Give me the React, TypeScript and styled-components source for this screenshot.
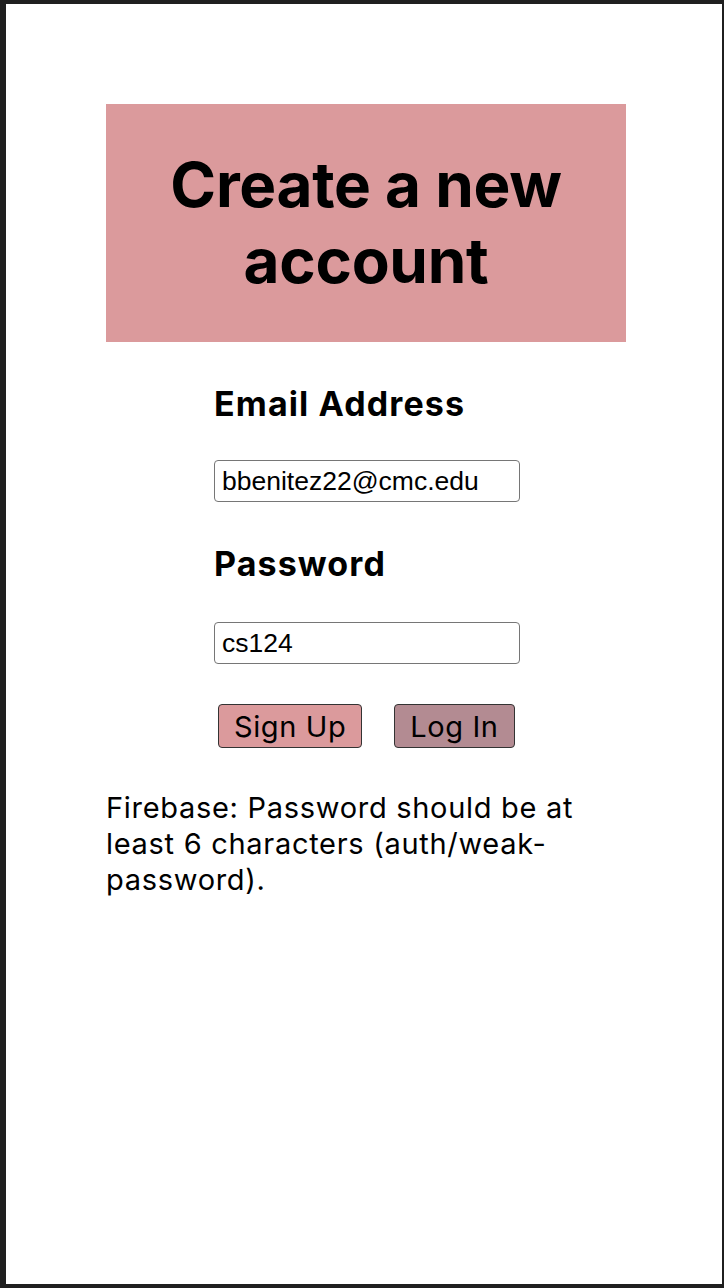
import React from "react";
import styled, { createGlobalStyle } from "styled-components";

const Global = createGlobalStyle`
  html, body { margin: 0; padding: 0; background: #1f1f1f; }
  body { font-family: Inter, "Noto Sans", sans-serif; }
`;

const Frame = styled.div`
  margin: 4px 2px 0 6px;
  height: 1280px;
  background: #ffffff;
  padding: 100px 0 0 100px;
  box-sizing: border-box;
`;

const Column = styled.div`
  width: 520px;
  display: flex;
  flex-direction: column;
`;

const TitleBox = styled.div`
  background: #db9a9c;
  height: 238px;
  display: flex;
  align-items: center;
  justify-content: center;
`;

const Title = styled.h1`
  margin: 0;
  font-family: Inter, sans-serif;
  font-weight: 700;
  font-size: 62px;
  line-height: 76px;
  text-align: center;
  color: #000;
  letter-spacing: -0.3px;
`;

const Form = styled.div`
  display: flex;
  flex-direction: column;
  align-items: flex-start;
  padding-left: 108px;
`;

const Label = styled.h2<{ $top: number }>`
  margin: ${(p) => p.$top}px 0 0 0;
  font-family: Inter, sans-serif;
  font-weight: 700;
  font-size: 34px;
  line-height: 40px;
  letter-spacing: 1.1px;
  color: #000;
`;

const Input = styled.input<{ $top: number }>`
  margin-top: ${(p) => p.$top}px;
  width: 306px;
  height: 42px;
  box-sizing: border-box;
  border: 1px solid #767676;
  border-radius: 4px;
  padding: 0 7px;
  font-family: "Liberation Sans", Arial, sans-serif;
  font-size: 26.5px;
  color: #000;
  background: #fff;
  outline: none;
`;

const Buttons = styled.div`
  display: flex;
  gap: 32px;
  margin: 40px 0 0 4px;
`;

const Button = styled.button<{ $bg: string }>`
  height: 44px;
  box-sizing: border-box;
  padding: 0 15px;
  border: 1px solid #333;
  border-radius: 4px;
  background: ${(p) => p.$bg};
  font-family: Inter, sans-serif;
  font-size: 29px;
  letter-spacing: 0.6px;
  color: #000;
  line-height: 1;
`;

const ErrorText = styled.p`
  margin: 42px 0 0 0;
  font-family: Inter, sans-serif;
  font-size: 29px;
  letter-spacing: 0.7px;
  line-height: 36px;
  color: #000;
  width: 500px;
`;

export default function App() {
  return (
    <>
      <Global />
      <Frame>
        <Column>
          <TitleBox>
            <Title>
              Create a new
              <br />
              account
            </Title>
          </TitleBox>
          <Form>
            <Label $top={42}>Email Address</Label>
            <Input $top={36} defaultValue="bbenitez22@cmc.edu" />
            <Label $top={42}>Password</Label>
            <Input $top={38} defaultValue="cs124" />
            <Buttons>
              <Button $bg="#db9a9c">Sign Up</Button>
              <Button $bg="#b38b92">Log In</Button>
            </Buttons>
          </Form>
          <ErrorText>
            Firebase: Password should be at least 6 characters (auth/weak-password).
          </ErrorText>
        </Column>
      </Frame>
    </>
  );
}
